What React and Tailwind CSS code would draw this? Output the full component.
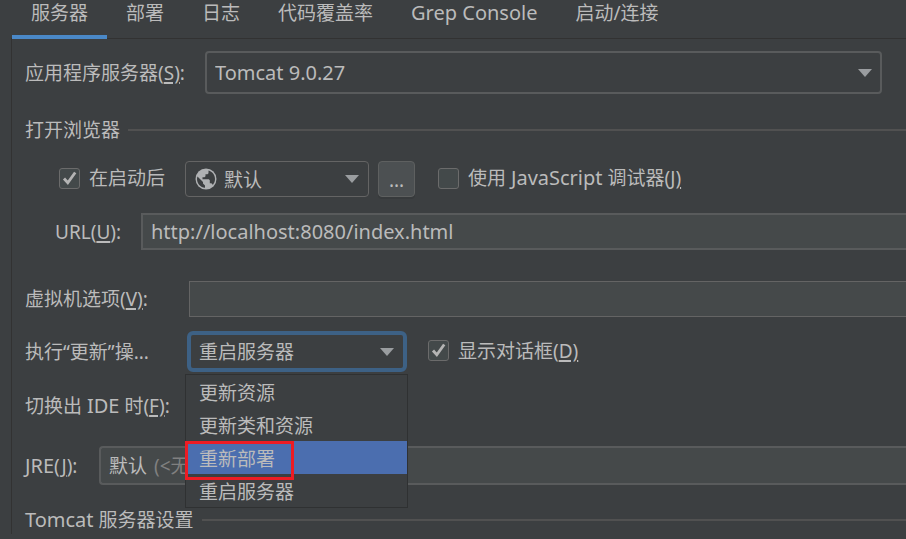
import React, { useState } from "react";

const tabs = ["服务器", "部署", "日志", "代码覆盖率", "Grep Console", "启动/连接"];

const updateActions = ["更新资源", "更新类和资源", "重新部署", "重启服务器"];

const Arrow = ({ className = "right-2.5" }) => (
  <svg
    className={`pointer-events-none absolute top-1/2 -translate-y-1/2 ${className}`}
    width="14"
    height="8"
    viewBox="0 0 14 8"
  >
    <path d="M0 0H14L7 8Z" fill="#9a9da0" />
  </svg>
);

const Globe = () => (
  <svg
    className="pointer-events-none absolute left-2.5 top-1/2 -translate-y-1/2"
    width="22"
    height="22"
    viewBox="0 0 22 22"
  >
    <circle cx="11" cy="11" r="10.500" fill="#afb1b3" />
    <path
      d="M2.500 8.500L8 14V15.500L10 17.500V19.800C5.500 19.400 2 15.800 2 11C2 10.100 2.200 9.200 2.500 8.500ZM13.500 2.500C17.200 3.500 20 6.900 20 11C20 13.300 19.200 15.300 17.800 16.900C17.400 15.900 16.700 15.300 15.500 15.300H14.800V12.300L13.800 11.300H7.500V9.300H9.500L10.500 8.300V6.300H12.500L13.500 5.300Z"
      fill="#3c3f41"
    />
  </svg>
);

const CheckBox = ({ id, checked, onChange, children }) => (
  <div className="flex items-center gap-[9px] pb-0.5">
    <span className="relative flex">
      <input
        id={id}
        type="checkbox"
        checked={checked}
        onChange={(e) => onChange(e.target.checked)}
        className="size-[21px] appearance-none rounded-[3px] border border-[#6b6b6b] bg-[#43494a]"
      />
      {checked && (
        <svg
          className="pointer-events-none absolute inset-0"
          width="21"
          height="21"
          viewBox="0 0 21 21"
          fill="none"
        >
          <path d="M5 10.500L8.800 14.800L16.200 4.500" stroke="#b4b4b4" strokeWidth="2.800" />
        </svg>
      )}
    </span>
    <label htmlFor={id}>{children}</label>
  </div>
);

const SectionTitle = ({ children }) => (
  <div className="flex items-center gap-2">
    <h2>{children}</h2>
    <div className="h-0.5 flex-1 bg-[#515151]" />
  </div>
);

const Mnemonic = ({ children }) => (
  <u className="underline decoration-2 underline-offset-2">{children}</u>
);

// Latin words run slightly larger than the Chinese text around them
const Latin = ({ children }) => (
  <span className="text-[20px] leading-none">{children}</span>
);

export default function App() {
  const [activeTab, setActiveTab] = useState("服务器");
  const [afterLaunch, setAfterLaunch] = useState(true);
  const [debuggerOn, setDebuggerOn] = useState(false);
  const [showDialog, setShowDialog] = useState(true);
  const [url, setUrl] = useState("http://localhost:8080/index.html");
  const [vmOptions, setVmOptions] = useState("");
  const [action, setAction] = useState("重启服务器");
  const [highlighted, setHighlighted] = useState("重新部署");

  return (
    <div className="min-h-screen overflow-hidden bg-[#3c3f41] pl-[11px] font-['Noto_Sans','Noto_Sans_CJK_SC',sans-serif] text-[19px] leading-7 text-[#bbbbbb]">
      {/* Tabs */}
      <nav className="flex border-b border-[#323232] pl-px">
        {tabs.map((tab) => (
          <button
            key={tab}
            onClick={() => setActiveTab(tab)}
            className={`-mb-px border-b-4 px-[19px] pb-2 leading-[27px] ${
              activeTab === tab ? "border-[#4a88c7]" : "border-transparent"
            }`}
          >
            {tab === "Grep Console" ? <Latin>{tab}</Latin> : tab}
          </button>
        ))}
      </nav>

      <main className="border-l border-[#323232] pl-[13px] pt-3">
        {/* Application server */}
        <div className="flex items-center pr-6">
          <label htmlFor="server" className="w-[180px] shrink-0">
            应用程序服务器(<Mnemonic>S)</Mnemonic>:
          </label>
          <div className="relative flex-1">
            <select
              id="server"
              className="block h-[43px] w-full appearance-none rounded-[4px] border-2 border-[#595b5c] bg-[#3c3f41] pl-2 text-[20px]"
            >
              <option>Tomcat 9.0.27</option>
            </select>
            <Arrow />
          </div>
        </div>

        {/* Open browser */}
        <div className="pt-[22px]">
          <SectionTitle>打开浏览器</SectionTitle>
        </div>
        <div className="flex items-center pl-[34px] pt-[17px]">
          <CheckBox id="launch" checked={afterLaunch} onChange={setAfterLaunch}>
            在启动后
          </CheckBox>
          <div className="relative ml-5 w-[184px]">
            <select
              aria-label="浏览器"
              className="block h-9 w-full appearance-none rounded-[4px] border border-[#646464] bg-[#3c3f41] pl-[38px] pt-0.5"
            >
              <option>默认</option>
            </select>
            <Globe />
            <Arrow />
          </div>
          <button className="ml-[9px] h-9 w-[37px] rounded-[4px] border border-[#5e6060] bg-[#4c5052] pt-0.5 shadow-[0_2px_0_#373a3c]">
            ...
          </button>
          <div className="ml-[23px]">
            <CheckBox id="debugger" checked={debuggerOn} onChange={setDebuggerOn}>
              使用 <Latin>JavaScript</Latin> 调试器(J<Mnemonic>)</Mnemonic>
            </CheckBox>
          </div>
        </div>
        <div className="flex items-center pl-[30px] pt-4">
          <label htmlFor="url" className="w-[86px] shrink-0">
            URL(<Mnemonic>U</Mnemonic>):
          </label>
          <input
            id="url"
            value={url}
            onChange={(e) => setUrl(e.target.value)}
            className="h-[37px] min-w-0 flex-1 border-2 border-r-0 border-[#595b5c] bg-[#45494a] px-2 text-[20px] outline-none"
          />
        </div>

        {/* VM options */}
        <div className="flex items-center pt-[31px]">
          <label htmlFor="vm" className="w-[164px] shrink-0">
            虚拟机选项(<Mnemonic>V)</Mnemonic>:
          </label>
          <input
            id="vm"
            value={vmOptions}
            onChange={(e) => setVmOptions(e.target.value)}
            className="h-9 min-w-0 flex-1 border border-r-0 border-[#646464] bg-[#45494a] px-2 outline-none"
          />
        </div>

        {/* Update action with its open list */}
        <div className="flex items-center pt-[14px]">
          <label htmlFor="action" className="w-[162px] shrink-0">
            执行“更新”操...
          </label>
          <div className="relative w-[220px]">
            <select
              id="action"
              value={action}
              onChange={(e) => setAction(e.target.value)}
              className="block h-[41px] w-full appearance-none rounded-[6px] border-4 border-[#3d6185] bg-[#3c3f41] pl-2 outline-none"
            >
              {updateActions.map((item) => (
                <option key={item}>{item}</option>
              ))}
            </select>
            <Arrow className="right-[13px]" />
            <ul
              role="listbox"
              className="absolute -left-0.5 -right-px top-full z-10 mt-0.5 border border-[#2f3132] bg-[#3c3f41]"
            >
              {updateActions.map((item) => (
                <li
                  key={item}
                  role="option"
                  aria-selected={highlighted === item}
                  onMouseEnter={() => setHighlighted(item)}
                  onClick={() => setAction(item)}
                  className={`relative h-[33px] pl-[13px] pt-1 ${
                    highlighted === item ? "bg-[#4b6eaf]" : ""
                  }`}
                >
                  {item}
                  {item === "重新部署" && (
                    <span className="absolute -left-px top-0 z-10 h-[39px] w-[109px] border-3 border-[#ed1c24]" />
                  )}
                </li>
              ))}
            </ul>
          </div>
          <div className="ml-[21px]">
            <CheckBox id="dialog" checked={showDialog} onChange={setShowDialog}>
              显示对话框(<Mnemonic>D)</Mnemonic>
            </CheckBox>
          </div>
        </div>

        <div className="pt-5">
          切换出 <Latin>IDE</Latin> 时(<Mnemonic>F)</Mnemonic>:
        </div>

        {/* JRE */}
        <div className="flex items-center pt-[26px]">
          <label htmlFor="jre" className="w-[74px] shrink-0">
            <Latin>JRE</Latin>(<Mnemonic>J</Mnemonic>):
          </label>
          <div className="flex h-[39px] min-w-0 flex-1 items-center rounded-l-[4px] border-2 border-r-0 border-[#595b5c] bg-[#45494a] pl-2">
            <input
              id="jre"
              defaultValue="默认"
              className="w-[38px] bg-transparent outline-none"
            />
            <span className="ml-[7px] text-[#808080]">(&lt;无</span>
          </div>
        </div>

        <div className="pt-[21px]">
          <SectionTitle>
            <Latin>Tomcat</Latin> 服务器设置
          </SectionTitle>
        </div>
      </main>
    </div>
  );
}
